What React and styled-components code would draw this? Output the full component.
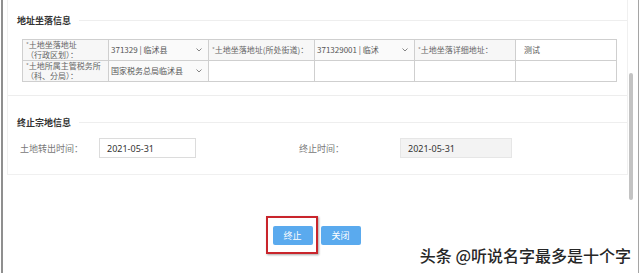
import React from "react";
import styled, { createGlobalStyle } from "styled-components";

const GlobalStyle = createGlobalStyle`
  html, body {
    margin: 0;
    padding: 0;
    background: #ffffff;
    font-family: "Noto Sans", "Noto Sans CJK SC", sans-serif;
  }
`;

const Frame = styled.div`
  margin-left: 1px;
  width: 635px;
  height: 273px;
  border-left: 2px solid #8f8f8f;
  border-right: 1px solid #a5a5a5;
  display: flex;
  position: relative;
  overflow: hidden;
`;

const Main = styled.div`
  width: 621px;
  padding-left: 4px;
  display: flex;
  flex-direction: column;
`;

const ScrollTrack = styled.div`
  width: 10px;
  display: flex;
  flex-direction: column;
`;

const ScrollThumb = styled.div`
  margin: 73px 0 0 1px;
  width: 4px;
  height: 127px;
  border-radius: 2px;
  background: #c3c3c3;
`;

const Card = styled.div`
  width: 619px;
  border: 1px solid #f0f0f0;
  border-top: none;
`;

const Section = styled.div`
  padding: ${(p) => p.$top}px 0 ${(p) => p.$bottom}px;
  border-bottom: ${(p) => (p.$divider ? "1px solid #ededed" : "none")};
`;

const Head = styled.div`
  display: flex;
  align-items: center;
  height: 12px;
  padding-left: 9px;
`;

const Title = styled.span`
  font-size: 9px;
  font-weight: 700;
  color: #333;
  font-family: "Noto Sans CJK SC", sans-serif;
  white-space: nowrap;
`;

const Rule = styled.div`
  flex: 1;
  height: 1px;
  margin-left: 8px;
  background: #eeeeee;
`;

const Table = styled.table`
  margin: 13px 0 0 14px;
  border-collapse: collapse;
  table-layout: fixed;
  width: 594px;
  font-family: "Noto Sans CJK SC", sans-serif;
  font-size: 8px;
  color: #666;
`;

const Cell = styled.td`
  height: 20px;
  padding: 0 0 0 ${(p) => p.$pad || 2}px;
  border: 1px solid #cfcfcf;
  background: ${(p) => (p.$label ? "#f7f7f7" : p.$select ? "#fafafa" : "#ffffff")};
  color: ${(p) => (p.$value ? "#555" : "inherit")};
  line-height: 10px;
  vertical-align: middle;
  white-space: nowrap;
  overflow: hidden;
`;

const Star = styled.span`
  color: #888;
  font-size: 6px;
  vertical-align: top;
`;

const SelectBox = styled.div`
  display: flex;
  align-items: center;
  justify-content: space-between;
  padding-right: 6px;
  color: #555;
`;

const Fields = styled.div`
  display: flex;
  align-items: center;
  margin-top: 10px;
  padding-left: 12px;
  font-family: "Noto Sans CJK SC", sans-serif;
`;

const FieldLabel = styled.span`
  width: ${(p) => p.$w}px;
  font-size: 9px;
  color: #777;
  white-space: nowrap;
`;

const DateInput = styled.div`
  width: ${(p) => p.$w}px;
  height: 18px;
  box-sizing: content-box;
  border: 1px solid ${(p) => (p.$readonly ? "#e6e6e6" : "#dcdcdc")};
  background: ${(p) => (p.$readonly ? "#f3f3f3" : "#ffffff")};
  margin-right: ${(p) => p.$gap || 0}px;
  padding-left: 7px;
  display: flex;
  align-items: center;
  font-family: "Noto Sans", sans-serif;
  font-size: 9px;
  color: #333;
`;

const Footer = styled.div`
  display: flex;
  justify-content: center;
  gap: 8px;
  margin-top: 51px;
  padding-right: 2px;
`;

const Button = styled.div`
  position: relative;
  width: 40px;
  height: 19px;
  border-radius: 2px;
  background: #5aaaee;
  color: #fff;
  font-family: "Noto Sans CJK SC", sans-serif;
  font-size: 9px;
  display: flex;
  align-items: center;
  justify-content: center;
`;

const Highlight = styled.div`
  position: absolute;
  left: -7px;
  top: -10px;
  width: 48px;
  height: 34px;
  border: 2px solid #c9252c;
  box-shadow: 1px 1px 2px rgba(0, 0, 0, 0.35);
`;

const Watermark = styled.div`
  position: absolute;
  right: 7px;
  bottom: 8px;
  font-family: "Noto Sans CJK SC", sans-serif;
  font-size: 16px;
  font-weight: 500;
  line-height: 20px;
  color: #262626;
  text-shadow: 0 0 2px #fff, 0 0 2px #fff;
  white-space: nowrap;
`;

const Chevron = () => (
  <svg width="6" height="4" viewBox="0 0 6 4">
    <polyline points="0.5,0.5 3,3 5.5,0.5" fill="none" stroke="#777" strokeWidth="0.9" />
  </svg>
);

const App = () => {
  return (
    <>
      <GlobalStyle />
      <Frame>
        <Main>
          <Card>
            <Section $top={14} $bottom={13} $divider>
              <Head>
                <Title>地址坐落信息</Title>
                <Rule />
              </Head>
              <Table>
                <colgroup>
                  <col style={{ width: 86 }} />
                  <col style={{ width: 100 }} />
                  <col style={{ width: 106 }} />
                  <col style={{ width: 100 }} />
                  <col style={{ width: 101 }} />
                  <col style={{ width: 101 }} />
                </colgroup>
                <tbody>
                  <tr>
                    <Cell $label $pad={3}>
                      <Star>*</Star>土地坐落地址
                      <br />（行政区划）：
                    </Cell>
                    <Cell $select>
                      <SelectBox>
                        <span>371329 | 临沭县</span>
                        <Chevron />
                      </SelectBox>
                    </Cell>
                    <Cell $label $pad={3}>
                      <Star>*</Star>土地坐落地址(所处街道)：
                    </Cell>
                    <Cell $select>
                      <SelectBox>
                        <span>371329001 | 临沭</span>
                        <Chevron />
                      </SelectBox>
                    </Cell>
                    <Cell $label $pad={3}>
                      <Star>*</Star>土地坐落详细地址：
                    </Cell>
                    <Cell $pad={8} $value>
                      测试
                    </Cell>
                  </tr>
                  <tr>
                    <Cell $label $pad={3}>
                      <Star>*</Star>土地所属主管税务所
                      <br />（科、分局）：
                    </Cell>
                    <Cell $select>
                      <SelectBox>
                        <span>国家税务总局临沭县</span>
                        <Chevron />
                      </SelectBox>
                    </Cell>
                    <Cell />
                    <Cell />
                    <Cell />
                    <Cell />
                  </tr>
                </tbody>
              </Table>
            </Section>
            <Section $top={20} $bottom={16}>
              <Head>
                <Title>终止宗地信息</Title>
                <Rule />
              </Head>
              <Fields>
                <FieldLabel $w={79}>土地转出时间：</FieldLabel>
                <DateInput $w={88} $gap={103}>2021-05-31</DateInput>
                <FieldLabel $w={101}>终止时间：</FieldLabel>
                <DateInput $w={103} $readonly>
                  2021-05-31
                </DateInput>
              </Fields>
            </Section>
          </Card>
          <Footer>
            <Button>
              终止
              <Highlight />
            </Button>
            <Button>关闭</Button>
          </Footer>
        </Main>
        <ScrollTrack>
          <ScrollThumb />
        </ScrollTrack>
        <Watermark>头条 @听说名字最多是十个字</Watermark>
      </Frame>
    </>
  );
};

export default App;
